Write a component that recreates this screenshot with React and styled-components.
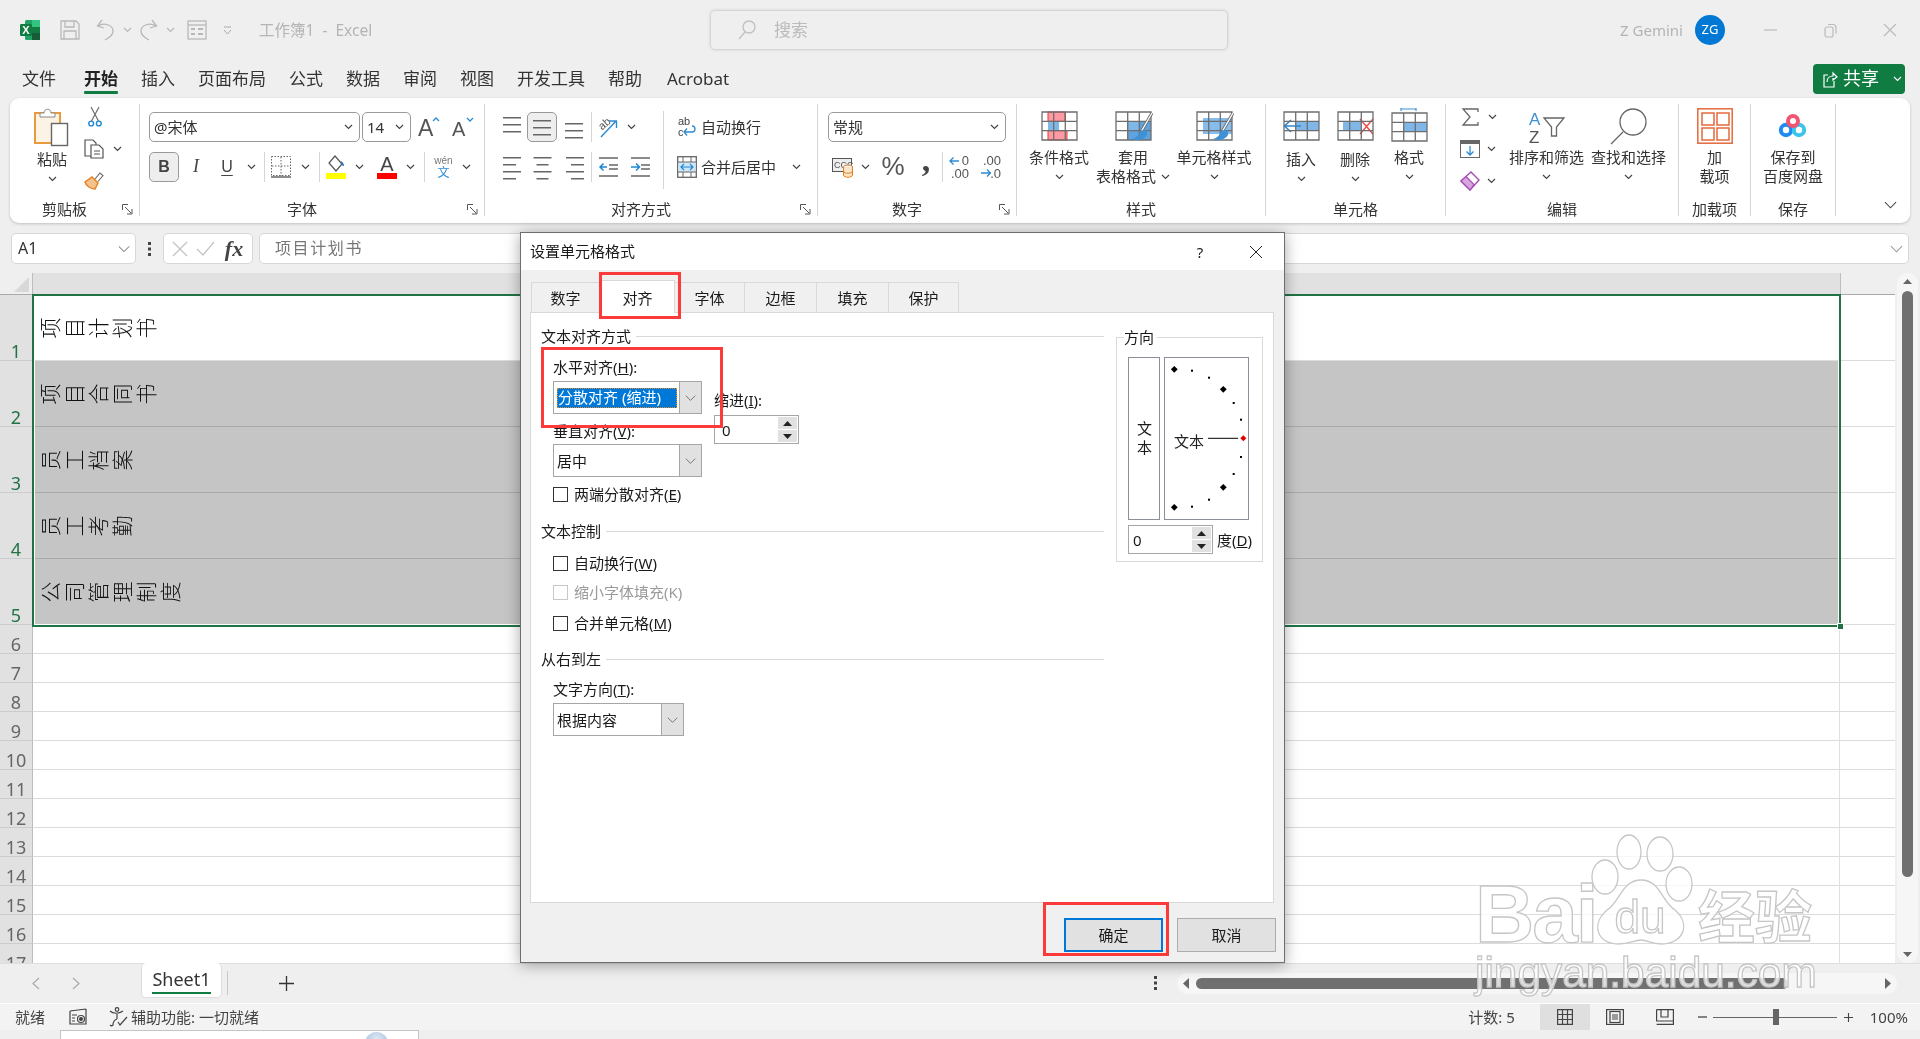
import React from 'react';
import styled, { createGlobalStyle } from 'styled-components';

const Global = createGlobalStyle`
  html, body { margin: 0; padding: 0; width: 1920px; height: 1039px; overflow: hidden; background: #efefef; }
  body { font-family: "Noto Sans", "Noto Sans CJK SC", sans-serif; font-size: 15px; line-height: 1.2; color: #333; }
  svg { display: block; flex: none; overflow: visible; }
`;

const Page = styled.div`position: relative; width: 1920px; height: 1039px; display: flex; flex-direction: column; overflow: hidden; background: #efefef; filter: blur(.25px);`;

/* ---------- title bar ---------- */
const TitleBar = styled.header`height: 60px; flex: none; display: flex; align-items: center;`;
const QuickAccess = styled.div`width: 710px; flex: none; padding-left: 20px; box-sizing: border-box; display: flex; align-items: center;`;
const QuickCell = styled.div`width: ${p => p.$w}px; flex: none; display: flex; justify-content: center; align-items: center;`;
const DocTitle = styled.div`margin-left: 12px; color: #b4b4b4; font-size: 15.5px; white-space: pre;`;
const SearchBox = styled.div`width: 518px; height: 40px; box-sizing: border-box; flex: none; display: flex; align-items: center; gap: 18px; padding-left: 27px; border: 1px solid #d6d6d6; border-radius: 5px; box-shadow: 0 0 3px rgba(0,0,0,.12); color: #bbb; font-size: 17px;`;
const TitleRight = styled.div`flex: 1; display: flex; justify-content: flex-end; align-items: center;`;
const UserName = styled.div`color: #b4b4b4; font-size: 15px;`;
const Avatar = styled.div`width: 30px; height: 30px; border-radius: 50%; background: #0078d4; color: #fff; font-size: 13px; display: flex; align-items: center; justify-content: center; margin: 0 15px 0 12px;`;
const WinBtn = styled.div`width: 60px; display: flex; justify-content: center;`;

/* ---------- tabs ---------- */
const TabRow = styled.nav`height: 38px; flex: none; display: flex; align-items: center; gap: 23px; padding-left: 22px; font-size: 17px; color: #333;`;
const RibbonTab = styled.div`position: relative; font-weight: ${p => p.$active ? 700 : 400}; margin-left: ${p => p.$shift || 0}px; color: ${p => p.$active ? '#222' : '#333'};
  &::after { content: ''; display: ${p => p.$active ? 'block' : 'none'}; position: absolute; left: 0; right: 0; bottom: -5px; height: 3px; background: #107c41; border-radius: 1px; }`;
const ShareBtn = styled.div`margin-left: auto; margin-right: 15px; width: 92px; height: 30px; background: #107c41; color: #fff; border-radius: 4px; font-size: 18px; display: flex; align-items: center; padding-left: 10px; gap: 6px; box-sizing: border-box;`;

/* ---------- ribbon ---------- */
const Ribbon = styled.div`width: 1900px; height: 125px; margin-left: 10px; flex: none; box-sizing: border-box; padding-top: 6px; background: #fff; border-radius: 9px; box-shadow: 0 1px 3px rgba(0,0,0,.2); display: flex; font-size: 15px; color: #333;`;
const Group = styled.section`width: ${p => p.$w}px; flex: none; height: 112px; box-sizing: border-box; border-right: 1px solid #d6d6d6; display: flex; flex-direction: column;`;
const GroupBody = styled.div`height: 98px; flex: none; box-sizing: border-box; padding: 4px 0 0 ${p => p.$pl || 0}px; display: flex; justify-content: ${p => p.$center ? 'center' : 'flex-start'};`;
const GroupFoot = styled.div`display: flex; height: 15px; line-height: 15px;`;
const GroupName = styled.div`flex: 1; text-align: center; white-space: nowrap;`;
const Launcher = styled.div`width: 20px; flex: none; display: flex; align-items: center; justify-content: flex-start; padding-left: 3px; box-sizing: border-box;`;
const RibbonEnd = styled.div`flex: 1; display: flex; align-items: flex-end; justify-content: flex-end; padding: 0 13px 14px 0;`;

const LargeTool = styled.div`width: ${p => p.$w}px; flex: none; display: flex; flex-direction: column; align-items: center; margin-left: ${p => p.$ml || 0}px;`;
const IconSlot = styled.div`height: ${p => p.$h || 40}px; display: flex; justify-content: center; align-items: flex-start;`;
const ToolLine = styled.div`height: 19px; line-height: 19px; white-space: nowrap; display: flex; align-items: center; justify-content: center; gap: 5px;`;

const SmallStack = styled.div`display: flex; flex-direction: column; margin-top: -7px; margin-left: ${p => p.$ml || 0}px; width: ${p => p.$w}px; flex: none;`;
const StackRow = styled.div`height: 32px; display: flex; align-items: center;`;
const Chevron = styled.div`margin-left: ${p => p.$ml || 0}px; display: flex;`;

const ToolColumn = styled.div`display: flex; flex-direction: column; gap: 10px; margin-top: 4px; width: ${p => p.$w ? p.$w + 'px' : 'auto'}; flex: none;`;
const ToolRow = styled.div`display: flex; height: 30px; align-items: center;`;
const Cell = styled.div`width: ${p => p.$w}px; height: 30px; flex: none; box-sizing: border-box; display: flex; align-items: center; justify-content: center; color: #444;
  ${p => p.$on ? 'background:#eee;border:1px solid #999;border-radius:5px;' : ''}`;
const Sep = styled.div`width: 1px; height: 30px; flex: none; background: #d6d6d6;`;
const TallSep = styled.div`width: 1px; height: 78px; flex: none; background: #d6d6d6; margin-top: 3px;`;
const Combo = styled.div`width: ${p => p.$w}px; height: 30px; box-sizing: border-box; flex: none; border: 1px solid #9a9a9a; border-radius: 5px; display: flex; align-items: center; justify-content: space-between; padding: 0 6px 0 4px; font-size: 15px; color: #333; margin-right: ${p => p.$mr || 0}px;`;
const GlyphBold = styled.span`font-family: "Liberation Sans", sans-serif; font-weight: 700; font-size: 16px;`;
const GlyphItalic = styled.span`font-family: "Liberation Serif", serif; font-style: italic; font-size: 18px;`;
const GlyphUnder = styled.span`font-family: "Liberation Sans", sans-serif; font-size: 16px; text-decoration: underline; text-underline-offset: 3px;`;
const GlyphPercent = styled.span`font-family: "Liberation Sans", sans-serif; font-size: 26px; color: #555;`;
const GlyphComma = styled.span`font-family: "Liberation Serif", serif; font-weight: 700; font-size: 34px; line-height: 20px; margin-top: -14px; color: #444;`;
const TextColumn = styled.div`display: flex; flex-direction: column; gap: 10px; margin: 4px 0 0 12px; flex: none;`;
const TextTool = styled.div`height: 30px; box-sizing: border-box; padding-bottom: 1px; display: flex; align-items: center; white-space: nowrap;`;
const TextToolIcon = styled.div`width: 21px; margin-right: 4px; flex: none; display: flex; justify-content: center;`;

/* ---------- formula bar ---------- */
const FormulaBar = styled.div`height: 31px; margin: 10px 0 9px 11px; flex: none; display: flex; align-items: center;`;
const fieldBox = `height: 31px; box-sizing: border-box; border: 1px solid #d8d8d8; border-radius: 5px; background: #fff; display: flex; align-items: center;`;
const NameBox = styled.div`${fieldBox} width: 125px; padding: 0 5px 0 6px; justify-content: space-between; font-size: 16px; color: #333;`;
const Dots = styled.div`width: 27px; flex: none; display: flex; justify-content: center;`;
const FxBox = styled.div`${fieldBox} width: 90px; justify-content: space-around; padding: 0 4px;`;
const FxGlyph = styled.span`font-family: "Liberation Serif", serif; font-style: italic; font-weight: 700; font-size: 22px; line-height: 24px; color: #444;`;
const FormulaInput = styled.div`${fieldBox} width: 1650px; margin-left: 6px; padding: 0 5px 0 15px; justify-content: space-between; color: #777; font-size: 16px; letter-spacing: 1.6px;`;

/* ---------- sheet ---------- */
const SheetArea = styled.div`height: 690px; flex: none; display: flex;`;
const Grid = styled.div`width: 1895px; flex: none; overflow: hidden; position: relative;`;
const HeadRow = styled.div`height: 22px; display: flex; box-sizing: border-box;`;
const Corner = styled.div`width: 33px; flex: none; box-sizing: border-box; border-right: 1px solid #bdbdbd; border-bottom: 1px solid #aaa; display: flex; justify-content: flex-end; align-items: flex-end; padding: 0 3px 2px 0;`;
const ColHead = styled.div`width: 1808px; flex: none; background: #e1e1e1; border-bottom: 1px solid #aaa; border-right: 1px solid #bdbdbd; box-sizing: border-box;`;
const ColRest = styled.div`flex: 1; border-bottom: 1px solid #aaa;`;
const SheetRow = styled.div`height: ${p => p.$h}px; display: flex;`;
const RowHead = styled.div`width: 33px; flex: none; box-sizing: border-box; background: #e1e1e1; border-right: 1px solid #bdbdbd; border-bottom: 1px solid #ccc; color: ${p => p.$sel ? '#217346' : '#666'}; font-size: 18px; line-height: 20px; text-align: center; display: flex; align-items: flex-end; justify-content: center;`;
const RowNumber = styled.span`margin-bottom: -1px;`;
const MainCell = styled.div`width: 1807px; flex: none; box-sizing: border-box; border-right: 1px solid #e0e0e0; border-bottom: 1px solid ${p => p.$shade ? '#a9a9a9' : '#dcdcdc'}; background: ${p => p.$shade ? '#c5c5c5' : '#fff'}; padding: 24px 0 0 7px;`;
const RestCell = styled.div`flex: 1; background: #fff; border-bottom: 1px solid #dcdcdc;`;
const RotatedText = styled.div`writing-mode: vertical-lr; text-orientation: upright; width: 21px; line-height: 21px; font-size: 21px; letter-spacing: 3px; font-weight: 300; color: #111; white-space: nowrap; transform-origin: 10.5px 10.5px; transform: rotate(-90deg);`;
const Selection = styled.div`position: absolute; left: 32px; top: 21px; width: 1809px; height: 333px; box-sizing: border-box; border: 2px solid #217346; box-shadow: inset 0 0 0 1px #fff;`;
const SelHandle = styled.div`position: absolute; right: -5px; bottom: -5px; width: 5px; height: 5px; background: #217346; border: 1px solid #fff;`;

const VScroll = styled.div`flex: 1; padding: 0 2px;`;
const VTrack = styled.div`height: 100%; box-sizing: border-box; background: #f6f6f6; border-radius: 10px; padding: 6px 0; display: flex; flex-direction: column; align-items: center;`;
const VThumb = styled.div`width: 11px; height: 586px; background: #707070; border-radius: 6px; margin-top: 7px;`;
const VDown = styled.div`margin-top: auto;`;

/* ---------- sheet tabs ---------- */
const SheetBar = styled.div`height: 40px; flex: none; display: flex; align-items: center; padding: 0 0 1px 16px; box-sizing: border-box; border-top: 1px solid #dedede; position: relative;`;
const NavArrow = styled.div`width: 40px; flex: none; display: flex; justify-content: center;`;
const SheetTab = styled.div`position: relative; align-self: flex-start; margin: -1px 0 0 45px; width: 81px; height: 35px; box-sizing: border-box; background: #fff; border: 1px solid #ddd; border-top: 0; border-radius: 5px; font-size: 18px; color: #333; text-align: center; line-height: 32px;
  &::after { content: ''; position: absolute; left: 10px; right: 10px; bottom: 3px; height: 2px; background: #107c41; }`;
const TabSep = styled.div`width: 1px; height: 24px; background: #c8c8c8; margin-left: 5px; flex: none;`;
const AddSheet = styled.div`width: 40px; margin-left: 38px; display: flex; justify-content: center; flex: none;`;
const HDots = styled.div`margin-left: auto; margin-right: 19px;`;
const HTrack = styled.div`width: 720px; height: 21px; margin-right: 23px; flex: none; box-sizing: border-box; background: #f6f6f6; border-radius: 10px; display: flex; align-items: center; padding: 0 6px;`;
const HThumb = styled.div`width: 592px; height: 11px; margin-left: 7px; background: #707070; border-radius: 6px;`;
const HRight = styled.div`margin-left: auto;`;

/* ---------- status bar ---------- */
const StatusBar = styled.footer`height: 27px; flex: none; background: #f3f3f3; border-top: 1px solid #fff; box-sizing: border-box; display: flex; align-items: center; font-size: 15px; color: #444; padding-right: 12px;`;
const StatusItem = styled.div`margin-left: ${p => p.$ml === 'auto' ? 'auto' : p.$ml + 'px'}; flex: none; display: flex; align-items: center;`;
const ViewBtn = styled.div`width: 50px; height: 26px; flex: none; display: flex; align-items: center; justify-content: center; background: ${p => p.$on ? '#dfdfdf' : 'transparent'};`;
const ZoomTrack = styled.div`width: 124px; height: 1px; background: #666; margin-left: 6px; position: relative; flex: none;`;
const ZoomThumb = styled.div`position: absolute; left: 60px; top: -8px; width: 6px; height: 16px; background: #666;`;
const BottomStrip = styled.div`height: 9px; flex: none; padding-left: 60px; background: #efefef;`;
const StripWindow = styled.div`width: 359px; height: 9px; box-sizing: border-box; background: #fff; border: 1px solid #c5c5c5; border-bottom: 0; overflow: hidden; display: flex; justify-content: flex-end; padding-right: 30px;`;
const StripOrb = styled.div`width: 23px; height: 23px; margin-top: 1px; border-radius: 50%; background: radial-gradient(circle at 50% 30%, #dfe9f5, #8fb0d4);`;

/* ---------- dialog ---------- */
const Dialog = styled.div`position: absolute; left: 520px; top: 232px; width: 765px; height: 731px; box-sizing: border-box; background: #f0f0f0; border: 1px solid #6e6e6e; box-shadow: 0 2px 14px rgba(0,0,0,.35); display: flex; flex-direction: column; font-size: 15px; color: #1a1a1a; z-index: 5;`;
const DialogHead = styled.div`height: 37px; flex: none; background: #fff; display: flex; align-items: center; padding-left: 9px;`;
const DialogTitle = styled.div`flex: 1; margin-top: -2px;`;
const HeadBtn = styled.div`width: 56px; flex: none; display: flex; justify-content: center; font-size: 15px;`;
const DialogTabs = styled.div`height: 33px; flex: none; margin-top: 10px; padding-left: 10px; display: flex; align-items: flex-start; position: relative; z-index: 1;`;
const DlgTab = styled.div`width: ${p => p.$w}px; margin-top: ${p => p.$on ? 0 : 2}px; height: ${p => p.$on ? 33 : 31}px; box-sizing: border-box; background: ${p => p.$on ? '#fff' : '#f0f0f0'}; border: 1px solid #d9d9d9; border-left-width: ${p => p.$on || p.$first ? 1 : 0}px; border-bottom-width: ${p => p.$on ? 0 : 1}px; text-align: center; line-height: ${p => p.$on ? 34 : 31}px;`;
const Panel = styled.div`height: 591px; flex: none; margin: -1px 10px 0 9px; box-sizing: border-box; background: #fff; border: 1px solid #d9d9d9; padding: 14px 10px 0 10px; display: flex;`;
const LeftCol = styled.div`width: 563px; flex: none; margin-top: -1px;`;
const SectionHead = styled.div`height: 20px; line-height: 20px; margin-top: ${p => p.$mt || 0}px; display: flex; align-items: center; gap: 5px; white-space: nowrap;
  &::after { content: ''; flex: 1; height: 1px; background: #d9d9d9; }`;
const Indented = styled.div`padding-left: 12px;`;
const AlignGrid = styled.div`display: flex; gap: 12px;`;
const FieldCol = styled.div`width: ${p => p.$w}px; flex: none; display: flex; flex-direction: column; padding-top: ${p => p.$pt || 0}px;`;
const FieldLabel = styled.div`height: 20px; line-height: 20px; margin-top: ${p => p.$mt || 0}px; white-space: nowrap;`;
const Select = styled.div`width: ${p => p.$w}px; height: 33px; margin-top: ${p => p.$mt || 0}px; box-sizing: border-box; flex: none; border: 1px solid #a6a6a6; background: #fff; display: flex; padding: 0;`;
const SelectValue = styled.div`flex: 1; display: flex; align-items: center; padding: 0 1px 0 3px; overflow: hidden; white-space: nowrap;`;
const Highlight = styled.div`flex: 1; height: 20px; line-height: 19px; padding-left: 1px; background: #0078d7; color: #fff; outline: 1px dotted #e28b2c; outline-offset: -1px; margin-right: 1px;`;
const SelectBtn = styled.div`width: 21px; flex: none; background: #e1e1e1; border-left: 1px solid #a6a6a6; display: flex; align-items: center; justify-content: center;`;
const SpinBox = styled.div`width: ${p => p.$w}px; height: 29px; margin-top: ${p => p.$mt || 0}px; box-sizing: border-box; flex: none; border: 1px solid #a6a6a6; background: #fff; display: flex; align-items: center; justify-content: space-between; padding: 0 1px 0 ${p => p.$pl || 7}px;`;
const SpinBtns = styled.div`width: 19px; display: flex; flex-direction: column; gap: 1px;`;
const SpinBtn = styled.div`height: 12px; background: #e1e1e1; display: flex; align-items: center; justify-content: center;`;
const CheckRow = styled.label`height: 20px; margin-top: ${p => p.$mt || 0}px; display: flex; align-items: center; gap: 6px; white-space: nowrap; color: ${p => p.$off ? '#9a9a9a' : '#1a1a1a'};`;
const CheckBox = styled.span`width: 15px; height: 15px; box-sizing: border-box; flex: none; border: 1px solid ${p => p.$off ? '#c8c8c8' : '#333'}; background: #fff;`;
const DirField = styled.fieldset`width: 147px; height: 235px; margin: 0 0 0 12px; padding: 10px 0 0 11px; box-sizing: border-box; border: 1px solid #d9d9d9; flex: none; min-inline-size: 0;`;
const DirLegend = styled.legend`padding: 0 3px 0 0; margin-left: -4px; line-height: 20px;`;
const DirBoxes = styled.div`display: flex; gap: 4px;`;
const VerticalBox = styled.div`width: 32px; height: 163px; box-sizing: border-box; border: 1px solid #8a8f99; display: flex; align-items: center; justify-content: center; writing-mode: vertical-rl; text-orientation: upright; letter-spacing: 4px; padding-top: 2px;`;
const ArcBox = styled.div`width: 85px; height: 163px; box-sizing: border-box; border: 1px solid #8a8f99;`;
const DegreeRow = styled.div`display: flex; align-items: center; margin-top: 5px; gap: 4px; white-space: nowrap;`;
const DialogFoot = styled.div`flex: 1; display: flex; justify-content: flex-end; gap: 14px; padding: 15px 8px 0 0;`;
const DlgButton = styled.div`width: 99px; height: 34px; box-sizing: border-box; background: #e1e1e1; border: ${p => p.$primary ? '2px solid #0078d7' : '1px solid #adadad'}; display: flex; align-items: center; justify-content: center;`;
const RedBox = styled.div`position: absolute; left: ${p => p.$x - 521}px; top: ${p => p.$y - 233}px; width: ${p => p.$w}px; height: ${p => p.$h}px; box-sizing: border-box; border: 3px solid #fb3b3b; z-index: 3; pointer-events: none;`;

const WatermarkLayer = styled.div`position: absolute; left: 1470px; top: 830px; z-index: 6; filter: blur(.3px);`;

/* ---------- small icons ---------- */
const Chev = ({ c = '#444' }) => (
  <svg width="9" height="6" viewBox="0 0 9 6"><path d="M1 1l3.5 3.5L8 1" fill="none" stroke={c} strokeWidth="1.2" /></svg>
);
const WideChev = ({ c = '#555', w = 14 }) => (
  <svg width={w} height="8" viewBox="0 0 14 8"><path d="M1 1l6 6 6-6" fill="none" stroke={c} strokeWidth="1.1" /></svg>
);
const Tri = ({ down, c = '#222' }) => (
  <svg width="9" height="5" viewBox="0 0 9 5"><path d={down ? 'M0 0h9L4.5 5z' : 'M4.5 0L9 5H0z'} fill={c} /></svg>
);

const ExcelLogo = () => (
  <svg width="20" height="20" viewBox="0 0 20 20">
    <rect x="5" y="0" width="15" height="20" rx="1.5" fill="#21a366" />
    <rect x="12" y="0" width="8" height="7" fill="#33c481" />
    <rect x="12" y="13" width="8" height="7" fill="#185c37" />
    <rect x="12" y="7" width="8" height="6" fill="#107c41" />
    <rect x="0" y="4" width="12" height="12" rx="1.2" fill="#107c41" />
    <text x="6" y="14" textAnchor="middle" fontSize="11" fontWeight="700" fontFamily="Liberation Sans" fill="#fff">X</text>
  </svg>
);
const SaveIcon = () => (
  <svg width="20" height="20" viewBox="0 0 20 20" fill="none" stroke="#b8b8b8" strokeWidth="1.3">
    <path d="M1 1h15l3 3v15H1z" /><path d="M5 1v6h9V1M4 19v-8h12v8" />
  </svg>
);
const UndoIcon = ({ flip }) => (
  <svg width="19" height="22" viewBox="0 0 19 22" fill="none" stroke="#b8b8b8" strokeWidth="1.3" transform={flip ? 'scale(-1,1)' : undefined}>
    <path d="M6 1L1.5 7 8 9" /><path d="M2 7c6-4 15-1 15 5 0 4-4 7-8 9" />
  </svg>
);
const FormIcon = () => (
  <svg width="20" height="20" viewBox="0 0 20 20" fill="none" stroke="#b8b8b8" strokeWidth="1.3">
    <rect x="1" y="1" width="18" height="18" /><path d="M1 5h18" /><path d="M4 9h4M11 9h5M4 14h4M11 14h5" strokeWidth="2" />
  </svg>
);
const QatMore = () => (
  <svg width="9" height="9" viewBox="0 0 9 9" fill="none" stroke="#aaa" strokeWidth="1"><path d="M1 1h7M1 4l3.5 4L8 4" /></svg>
);
const SearchIcon = () => (
  <svg width="18" height="20" viewBox="0 0 18 20" fill="none" stroke="#c0c0c0" strokeWidth="1.3"><circle cx="11" cy="7" r="6" /><path d="M7 12L1 19" /></svg>
);
const ShareIcon = () => (
  <svg width="14" height="17" viewBox="0 0 14 17" fill="none" stroke="#fff" strokeWidth="1.2"><path d="M5 4H1v12h10v-6" /><path d="M4 11c0-4 3-6 6-6V2l4 4-4 3V7" /></svg>
);
const MinIcon = () => <svg width="13" height="2" viewBox="0 0 13 2"><path d="M0 1h13" stroke="#bbb" strokeWidth="1.2" /></svg>;
const RestoreIcon = () => (
  <svg width="13" height="15" viewBox="0 0 13 15" fill="none" stroke="#bbb" strokeWidth="1.2"><rect x="1" y="4" width="8" height="10" rx="2" /><path d="M4 1.5h5a3 3 0 013 3v6" /></svg>
);
const CloseIcon = ({ s = 12, c = '#bbb', sw = 1.2 }) => (
  <svg width={s} height={s} viewBox="0 0 12 12"><path d="M0 0l12 12M12 0L0 12" stroke={c} strokeWidth={sw} fill="none" /></svg>
);
const LaunchIcon = () => (
  <svg width="11" height="11" viewBox="0 0 11 11" fill="none" stroke="#555" strokeWidth="1"><path d="M.5 6V.5H6M3 3l6 6M5 10h5V5" /></svg>
);

const PasteIcon = () => (
  <svg width="36" height="40" viewBox="0 0 36 40">
    <rect x="1" y="5" width="25" height="30" fill="#fdf3e4" stroke="#e99a3c" strokeWidth="2" />
    <path d="M6 9V5h4c0-5 7-5 7 0h4v4z" fill="#fff" stroke="#888" strokeWidth="1" />
    <rect x="17.5" y="15.5" width="16" height="22" fill="#fff" stroke="#666" strokeWidth="1.4" />
  </svg>
);
const CutIcon = () => (
  <svg width="14" height="20" viewBox="0 0 14 20" fill="none">
    <path d="M3.5 14L11 0M10.5 14L3 0" stroke="#666" strokeWidth="1.1" />
    <circle cx="3.2" cy="16.5" r="2.4" stroke="#1e88d2" strokeWidth="1.4" /><circle cx="10.8" cy="16.5" r="2.4" stroke="#1e88d2" strokeWidth="1.4" />
  </svg>
);
const CopyIcon = () => (
  <svg width="20" height="20" viewBox="0 0 20 20" fill="#fff" stroke="#555" strokeWidth="1.2">
    <path d="M1 1h8l3 3v13H1z" /><path d="M7 6h8l4 4v9H7z" /><path d="M10 12h6M10 15h6" />
  </svg>
);
const BrushIcon = () => (
  <svg width="20" height="18" viewBox="0 0 20 18" fill="none">
    <path d="M11 7l5-6 3 2.5-5 6" fill="#fff" stroke="#666" strokeWidth="1.1" />
    <path d="M8 5l6 6-3 6c-4 0-9-3-10-7z" fill="#f5c28a" stroke="#e3811f" strokeWidth="1.4" />
  </svg>
);
const FontGrow = ({ small }) => (
  <svg width="22" height="24" viewBox="0 0 22 24">
    <text x="0" y="21" fontSize={small ? 20 : 23} fontFamily="Liberation Sans" fill="#555">A</text>
    <path d={small ? 'M15 3l3 3 3-3' : 'M15 6l3-3 3 3'} fill="none" stroke="#2b8ad3" strokeWidth="1.3" />
  </svg>
);
const BorderIcon = () => (
  <svg width="20" height="22" viewBox="0 0 20 22" fill="none" stroke="#666" strokeWidth="1" strokeDasharray="1.5 1.5">
    <rect x=".5" y=".5" width="19" height="19" /><path d="M10 1v19M1 10h18" /><path d="M0 21h20" strokeDasharray="none" strokeWidth="1.5" />
  </svg>
);
const FillIcon = () => (
  <svg width="20" height="24" viewBox="0 0 20 24">
    <path d="M9 1l7 8-6 7-7-8z" fill="#fff" stroke="#555" strokeWidth="1.2" />
    <path d="M15 6c2 1 3 3 3 5-2 0-3-2-3-5z" fill="#1b76c4" />
    <rect y="18" width="20" height="6" fill="#ffff00" />
  </svg>
);
const ColorA = () => (
  <svg width="20" height="24" viewBox="0 0 20 24">
    <text x="10" y="16" textAnchor="middle" fontSize="20" fontFamily="Liberation Sans" fill="#444">A</text>
    <rect y="18" width="20" height="6" fill="#ff0000" />
  </svg>
);
const WenIcon = () => (
  <svg width="19" height="24" viewBox="0 0 19 24">
    <text x="9.5" y="9" textAnchor="middle" fontSize="10" fontFamily="Liberation Sans" fill="#777">wén</text>
    <text x="9.5" y="22" textAnchor="middle" fontSize="12" fontFamily="Noto Sans CJK SC" fill="#2b8ad3">文</text>
  </svg>
);
const Lines = ({ w = [18, 18, 18], pos = 0, anchor = 'left', h = 20 }) => (
  <svg width="19" height={h} viewBox={`0 0 19 ${h}`} stroke="#666" strokeWidth="1.5">
    {w.map((l, i) => {
      const x = anchor === 'center' ? (19 - l) / 2 : anchor === 'right' ? 19 - l : 0;
      return <path key={i} d={`M${x} ${pos + i * 7 + .75}h${l}`} />;
    })}
  </svg>
);
const OrientIcon = () => (
  <svg width="21" height="21" viewBox="0 0 21 21" fill="none">
    <text x="1" y="11" fontSize="11" fontFamily="Liberation Sans" fill="#555" transform="rotate(-40 6 8)">ab</text>
    <path d="M3 20L18 4M11 4h7.5v7" stroke="#2b8ad3" strokeWidth="1.4" />
  </svg>
);
const IndentIcon = ({ right }) => (
  <svg width="19" height="20" viewBox="0 0 19 20" stroke="#666" strokeWidth="1.5" fill="none">
    <path d="M0 1h19M10 8h9M10 12h9M0 19h19" />
    <path d={right ? 'M0 10h8M5 6.5L8.5 10 5 13.5' : 'M8 10H1M4.5 6.5L1 10l3.5 3.5'} stroke="#1e88d2" />
  </svg>
);
const WrapIcon = () => (
  <svg width="18" height="22" viewBox="0 0 18 22">
    <text x="0" y="9" fontSize="11" fontFamily="Liberation Sans" fill="#444">ab</text>
    <text x="0" y="20" fontSize="11" fontFamily="Liberation Sans" fill="#444">c</text>
    <path d="M6 16h8c4 0 4-6 0-6M9 12.5L6 16l3 3.5" fill="none" stroke="#2b8ad3" strokeWidth="1.3" />
  </svg>
);
const MergeIcon = () => (
  <svg width="20" height="22" viewBox="0 0 20 22" fill="none">
    <rect x=".7" y=".7" width="18.6" height="20.6" stroke="#666" strokeWidth="1.3" />
    <rect x="1.5" y="6" width="17" height="10" fill="#cfe6f7" />
    <path d="M1 6h18M1 16h18M6 .7V6M14 .7V6M6 16v5M14 16v5" stroke="#666" />
    <path d="M4 11h12M7 8l-3 3 3 3M13 8l3 3-3 3" stroke="#1e88d2" strokeWidth="1.2" />
  </svg>
);
const AccountIcon = () => (
  <svg width="21" height="22" viewBox="0 0 21 22" fill="none">
    <rect x=".5" y="2.5" width="19" height="13" fill="#eee" stroke="#555" />
    <text x="2" y="12" fontSize="9" fontFamily="Liberation Sans" fill="#555">CCC</text>
    <ellipse cx="16" cy="11" rx="4.5" ry="2" fill="#fff" stroke="#e3811f" />
    <path d="M11.5 11v8c0 3 9 3 9 0v-8M11.5 15c0 3 9 3 9 0" fill="#fce4c7" stroke="#e3811f" />
  </svg>
);
const DecIcon = ({ more }) => (
  <svg width="20" height="24" viewBox="0 0 20 24">
    <text x="20" y="10" textAnchor="end" fontSize="13" fontFamily="Liberation Sans" fill="#555">{more ? '.00' : '0'}</text>
    <text x="20" y="23" textAnchor="end" fontSize="13" fontFamily="Liberation Sans" fill="#555">{more ? '.0' : '.00'}</text>
    <path d={more ? 'M0 18h9M6 14.5l3.5 3.5L6 21.5' : 'M10 6H1M4.5 2.5L1 6l3.5 3.5'} fill="none" stroke="#2b8ad3" strokeWidth="1.3" />
  </svg>
);

const SheetGrid = ({ children, top = 4 }) => (
  <svg width="38" height="40" viewBox="0 0 38 40" fill="none">
    <g transform={`translate(2 ${top})`}>
      <rect width="35" height="28" fill="#fff" />
      {children}
      <path d="M0 0h35v28H0zM11.7 0v28M23.3 0v28M0 9.3h35M0 18.7h35" stroke="#6e6e6e" strokeWidth="1.3" />
    </g>
  </svg>
);
const BrushHead = () => (
  <>
    <path d="M36 1L25 20" stroke="#666" strokeWidth="3" />
    <path d="M36 1L25 20" stroke="#fff" strokeWidth="1.4" />
    <path d="M24 19c3-2 6-1 7 1s-1 7-8 8c-3 0-6 0-7-1 4-1 7-4 8-8z" fill="#3f91d4" />
  </>
);
const Cond = () => (
  <SheetGrid>
    <rect x="6" y="0" width="17" height="9.3" fill="#ff9aa2" stroke="#e53b3b" />
    <rect x="6" y="9.3" width="11" height="9.3" fill="#7fb7e8" />
    <rect x="6" y="18.7" width="19" height="9.3" fill="#ff9aa2" stroke="#e53b3b" />
  </SheetGrid>
);
const WithBrush = ({ children }) => (
  <svg width="38" height="40" viewBox="0 0 38 40" fill="none">
    <g transform="translate(2 4)">
      <rect width="35" height="28" fill="#fff" />
      {children}
      <path d="M0 0h35v28H0zM11.7 0v28M23.3 0v28M0 9.3h35M0 18.7h35" stroke="#6e6e6e" strokeWidth="1.3" />
      <BrushHead />
    </g>
  </svg>
);
const TableStyle = () => (
  <WithBrush><rect x="11.7" y="9.3" width="23.3" height="18.7" fill="#5fa3de" /><rect x="11.7" y="9.3" width="11.6" height="9.4" fill="#7fb7e8" /></WithBrush>
);
const CellStyle = () => (
  <WithBrush><rect x="6" y="6" width="29" height="16" fill="#86bdec" /></WithBrush>
);
const InsertIcon = () => (
  <SheetGrid>
    <rect x="12" y="9.3" width="23" height="9.4" fill="#7fb7e8" />
    <path d="M0 14h17M7 8l-6.5 6L7 20" stroke="#2f86cf" strokeWidth="1.6" />
  </SheetGrid>
);
const DeleteIcon = () => (
  <SheetGrid>
    <rect x="5" y="9.3" width="18" height="9.4" fill="#7fb7e8" />
    <path d="M22 7l13 15M35 7L22 22" stroke="#f04747" strokeWidth="1.4" />
  </SheetGrid>
);
const FormatIcon = () => (
  <svg width="38" height="40" viewBox="0 0 38 40" fill="none">
    <path d="M11 1h15M11 0v3M26 0v3" stroke="#3f91d4" strokeWidth="1.2" />
    <g transform="translate(2 5)">
      <rect x="11.7" y="9.3" width="23.3" height="9.4" fill="#7fb7e8" />
      <path d="M0 0h35v28H0zM11.7 0v28M23.3 0v28M0 9.3h35M0 18.7h35" stroke="#6e6e6e" strokeWidth="1.3" />
    </g>
  </svg>
);
const SigmaIcon = () => (
  <svg width="17" height="18" viewBox="0 0 17 18" fill="none"><path d="M16 4V1H1l7 8-7 8h15v-3" stroke="#666" strokeWidth="1.3" /></svg>
);
const DownFill = () => (
  <svg width="20" height="18" viewBox="0 0 20 18" fill="none">
    <rect x=".5" y=".5" width="19" height="17" stroke="#666" /><rect x="1" y="1" width="18" height="3" fill="#666" />
    <path d="M10 6v9M6.5 11.5L10 15l3.5-3.5" stroke="#2b8ad3" strokeWidth="1.3" />
  </svg>
);
const EraserIcon = () => (
  <svg width="20" height="20" viewBox="0 0 20 20" fill="none">
    <path d="M11 1l8 8-9 10-9-9z" fill="#fff" stroke="#a64ab5" strokeWidth="1.4" />
    <path d="M6 5.5l8 8L10 19l-9-9z" fill="#d7a6df" stroke="#a64ab5" strokeWidth="1.2" />
  </svg>
);
const SortIcon = () => (
  <svg width="38" height="40" viewBox="0 0 38 40" fill="none">
    <text x="1" y="17" fontSize="17" fontFamily="Liberation Sans" fill="#3f91d4">A</text>
    <text x="1" y="35" fontSize="17" fontFamily="Liberation Sans" fill="#555">Z</text>
    <path d="M16 10h20l-7.5 9v9h-5v-9z" stroke="#666" strokeWidth="1.3" />
  </svg>
);
const FindIcon = () => (
  <svg width="38" height="40" viewBox="0 0 38 40" fill="none" stroke="#666" strokeWidth="1.3"><circle cx="23" cy="14" r="13" /><path d="M13 24L1 36" /></svg>
);
const AddinIcon = () => (
  <svg width="36" height="36" viewBox="0 0 36 36" fill="none" stroke="#e36a3c" strokeWidth="1.5">
    <rect x=".8" y=".8" width="34.4" height="34.4" /><rect x="5" y="5" width="12" height="12" /><rect x="20" y="5" width="12" height="12" /><rect x="5" y="20" width="12" height="12" /><rect x="20" y="20" width="12" height="12" />
  </svg>
);
const BaiduDisk = () => (
  <svg width="28" height="40" viewBox="0 0 28 40" fill="none">
    <g transform="translate(0 6)" strokeWidth="4">
      <circle cx="7" cy="16" r="5.2" stroke="#1f8bf0" />
      <circle cx="20" cy="16" r="5.2" stroke="#3cc5ec" />
      <circle cx="14" cy="7" r="5" stroke="#f0566f" />
    </g>
  </svg>
);
const MoreDots = () => (
  <svg width="4" height="14" viewBox="0 0 4 14" fill="#444"><rect y="0" width="3" height="3" /><rect y="5.5" width="3" height="3" /><rect y="11" width="3" height="3" /></svg>
);
const CheckMark = () => (
  <svg width="19" height="15" viewBox="0 0 19 15"><path d="M1 8l6 6L18 1" fill="none" stroke="#c4c4c4" strokeWidth="1.2" /></svg>
);
const CornerTri = () => <svg width="15" height="15" viewBox="0 0 15 15"><path d="M15 0v15H0z" fill="#d8d8d8" /></svg>;
const NavIcon = ({ right }) => (
  <svg width="8" height="13" viewBox="0 0 8 13"><path d={right ? 'M1 1l6 5.5L1 12' : 'M7 1L1 6.5 7 12'} fill="none" stroke="#aaa" strokeWidth="1.2" /></svg>
);
const PlusIcon = () => <svg width="15" height="15" viewBox="0 0 15 15"><path d="M7.5 0v15M0 7.5h15" stroke="#333" strokeWidth="1.3" /></svg>;
const Side = ({ right }) => (
  <svg width="6" height="11" viewBox="0 0 6 11"><path d={right ? 'M0 0l6 5.5L0 11z' : 'M6 0L0 5.5 6 11z'} fill="#666" /></svg>
);
const MacroIcon = () => (
  <svg width="18" height="18" viewBox="0 0 18 18" fill="none" stroke="#444" strokeWidth="1.2">
    <path d="M1 3l16-2M1 3v13h16V1" /><path d="M3 7h5M3 10h3M3 13h3" /><circle cx="12" cy="11" r="3.5" /><circle cx="12" cy="11" r="1.4" fill="#444" />
  </svg>
);
const A11yIcon = () => (
  <svg width="19" height="20" viewBox="0 0 19 20" fill="none" stroke="#444" strokeWidth="1.2">
    <circle cx="8" cy="2.5" r="1.8" /><path d="M1 4c3 3 9 3 13 0M8 7v5M8 12c-3 1-4 3-4 6-1 1-2 1-3 0M9 15l2 3 7-8" />
  </svg>
);
const ViewNormal = () => (
  <svg width="16" height="16" viewBox="0 0 16 16" fill="none" stroke="#444" strokeWidth="1.2"><path d="M.6.6h14.8v14.8H.6zM5.5 0v16M10.5 0v16M0 5.5h16M0 10.5h16" /></svg>
);
const ViewPage = () => (
  <svg width="18" height="16" viewBox="0 0 18 16" fill="none" stroke="#444" strokeWidth="1.2"><rect x=".6" y=".6" width="16.8" height="14.8" /><rect x="4" y="2.5" width="10" height="11" /><path d="M6 6h6M6 8h6M6 10h6" /></svg>
);
const ViewBreak = () => (
  <svg width="18" height="16" viewBox="0 0 18 16" fill="none" stroke="#444" strokeWidth="1.2"><path d="M.6.6h16.8v14.8H.6M.6.6v11.4h16.8M5 .6v7.4h7V.6" /></svg>
);
const ZoomMinus = () => <svg width="9" height="2" viewBox="0 0 9 2"><path d="M0 1h9" stroke="#444" strokeWidth="1.3" /></svg>;
const ZoomPlus = () => <svg width="9" height="9" viewBox="0 0 9 9"><path d="M0 4.5h9M4.5 0v9" stroke="#444" strokeWidth="1.1" /></svg>;

const Diamond = ({ x, y, c = '#000', r = 3.4 }) => <path d={`M${x} ${y - r}L${x + r} ${y}L${x} ${y + r}L${x - r} ${y}z`} fill={c} />;
const ArcDial = () => (
  <svg width="83" height="161" viewBox="1 1 83 161">
    {[[10.3, 12.3], [59.3, 32.3], [59.3, 130.3], [10.3, 150.3]].map(([x, y]) => <Diamond key={x + '-' + y} x={x} y={y} />)}
    {[[28, 13.7], [45, 20.7], [69.7, 46], [77, 62.7], [77, 100], [69.7, 117], [45, 142.7], [28, 149.7]].map(([x, y]) => <rect key={x + '-' + y} x={x - 1} y={y - 1} width="2" height="2" fill="#000" />)}
    <path d="M44 81.3h30" stroke="#000" strokeWidth="1" />
    <Diamond x={79.3} y={81.3} c="#e00000" r={3} />
    <text x="10" y="90" fontSize="15" fontFamily="Noto Sans CJK SC" fill="#222">文本</text>
  </svg>
);

const Watermark = () => (
  <svg width="352" height="180" viewBox="0 0 352 180" fill="#fff" fillOpacity=".78" stroke="#c6c6c6" strokeWidth="1.3">
    <text x="5" y="112" fontSize="82" fontWeight="700" letterSpacing="-2" fontFamily="Liberation Sans">Bai</text>
    <ellipse cx="135" cy="47" rx="13" ry="17" />
    <ellipse cx="159" cy="22" rx="12" ry="17" />
    <ellipse cx="190" cy="24" rx="13" ry="17" />
    <ellipse cx="209" cy="54" rx="13" ry="17" />
    <path d="M171 50C190 50 192 72 205 80C222 95 212 114 192 114C180 114 178 110 171 110C164 110 160 114 148 114C128 114 120 95 137 80C150 72 152 50 171 50Z" />
    <text x="170" y="103" textAnchor="middle" fontSize="46" fontFamily="Liberation Sans">du</text>
    <text x="228" y="108" fontSize="57" fontWeight="700" fontFamily="Noto Sans CJK SC">经验</text>
    <text x="5" y="157" fontSize="42.4" fontFamily="Liberation Sans">jingyan.baidu.com</text>
  </svg>
);

const ROWS = [
  { n: 1, text: '项目计划书' },
  { n: 2, text: '项目合同书', shade: true },
  { n: 3, text: '员工档案', shade: true },
  { n: 4, text: '员工考勤', shade: true },
  { n: 5, text: '公司管理制度', shade: true },
];
const PLAIN_ROWS = [6, 7, 8, 9, 10, 11, 12, 13, 14, 15, 16, 17];
const TABS = [
  { t: '文件' }, { t: '开始', active: true, shift: 5 }, { t: '插入' }, { t: '页面布局' }, { t: '公式' }, { t: '数据' },
  { t: '审阅' }, { t: '视图' }, { t: '开发工具' }, { t: '帮助' }, { t: 'Acrobat', shift: 2 },
];

export default function App() {
  return (
    <Page>
      <Global />
      <TitleBar>
        <QuickAccess>
          <ExcelLogo />
          <QuickCell $w={20} />
          <SaveIcon />
          <QuickCell $w={16} />
          <UndoIcon />
          <QuickCell $w={24}><Chev c="#b8b8b8" /></QuickCell>
          <UndoIcon flip />
          <QuickCell $w={24}><Chev c="#b8b8b8" /></QuickCell>
          <QuickCell $w={5} />
          <FormIcon />
          <QuickCell $w={40}><QatMore /></QuickCell>
          <DocTitle>工作簿1  -  Excel</DocTitle>
        </QuickAccess>
        <SearchBox><SearchIcon />搜索</SearchBox>
        <TitleRight>
          <UserName>Z Gemini</UserName>
          <Avatar>ZG</Avatar>
          <WinBtn><MinIcon /></WinBtn>
          <WinBtn><RestoreIcon /></WinBtn>
          <WinBtn><CloseIcon /></WinBtn>
        </TitleRight>
      </TitleBar>

      <TabRow>
        {TABS.map(({ t, active, shift }) => <RibbonTab key={t} $active={active} $shift={shift}>{t}</RibbonTab>)}
        <ShareBtn><ShareIcon />共享<Chevron $ml={8}><Chev c="#fff" /></Chevron></ShareBtn>
      </TabRow>

      <Ribbon>
        <Group $w={130}>
          <GroupBody $pl={26}>
            <LargeTool $w={32}>
              <IconSlot $h={42}><PasteIcon /></IconSlot>
              <ToolLine>粘贴</ToolLine>
              <ToolLine><Chev /></ToolLine>
            </LargeTool>
            <SmallStack $ml={16} $w={50}>
              <StackRow><Chevron $ml={4}><CutIcon /></Chevron></StackRow>
              <StackRow><CopyIcon /><Chevron $ml={9}><Chev /></Chevron></StackRow>
              <StackRow><BrushIcon /></StackRow>
            </SmallStack>
          </GroupBody>
          <GroupFoot><GroupName>剪贴板</GroupName><Launcher><LaunchIcon /></Launcher></GroupFoot>
        </Group>

        <Group $w={345}>
          <GroupBody $pl={9}>
            <ToolColumn>
              <ToolRow>
                <Combo $w={211} $mr={2}>@宋体<Chev /></Combo>
                <Combo $w={49}>14<Chev /></Combo>
                <Cell $w={36}><FontGrow /></Cell>
                <Cell $w={32}><FontGrow small /></Cell>
              </ToolRow>
              <ToolRow>
                <Cell $w={30} $on><GlyphBold>B</GlyphBold></Cell>
                <Cell $w={34}><GlyphItalic>I</GlyphItalic></Cell>
                <Cell $w={28}><GlyphUnder>U</GlyphUnder></Cell>
                <Cell $w={20}><Chev /></Cell>
                <Cell $w={3} />
                <Sep />
                <Cell $w={2} />
                <Cell $w={28}><BorderIcon /></Cell>
                <Cell $w={20}><Chev /></Cell>
                <Cell $w={4} />
                <Sep />
                <Cell $w={3} />
                <Cell $w={26}><FillIcon /></Cell>
                <Cell $w={20}><Chev /></Cell>
                <Cell $w={36}><ColorA /></Cell>
                <Cell $w={10}><Chev /></Cell>
                <Cell $w={9} />
                <Sep />
                <Cell $w={8} />
                <Cell $w={20}><WenIcon /></Cell>
                <Cell $w={26}><Chev /></Cell>
              </ToolRow>
            </ToolColumn>
          </GroupBody>
          <GroupFoot><GroupName>字体</GroupName><Launcher><LaunchIcon /></Launcher></GroupFoot>
        </Group>

        <Group $w={333}>
          <GroupBody $pl={12}>
            <ToolColumn $w={166}>
              <ToolRow>
                <Cell $w={30}><Lines pos={0} /></Cell>
                <Cell $w={30} $on><Lines pos={3} /></Cell>
                <Cell $w={34}><Lines pos={8} h={24} /></Cell>
                <Sep />
                <Cell $w={32}><OrientIcon /></Cell>
                <Cell $w={14}><Chev /></Cell>
              </ToolRow>
              <ToolRow>
                <Cell $w={30}><Lines w={[18, 13, 18, 13]} pos={1} h={22} /></Cell>
                <Cell $w={30}><Lines w={[18, 12, 18, 12]} pos={1} anchor="center" h={22} /></Cell>
                <Cell $w={34}><Lines w={[18, 13, 18, 13]} pos={1} anchor="right" h={22} /></Cell>
                <Sep />
                <Cell $w={32}><IndentIcon /></Cell>
                <Cell $w={32}><IndentIcon right /></Cell>
              </ToolRow>
            </ToolColumn>
            <TallSep />
            <TextColumn>
              <TextTool><TextToolIcon><WrapIcon /></TextToolIcon>自动换行</TextTool>
              <TextTool><TextToolIcon><MergeIcon /></TextToolIcon>合并后居中<Chevron $ml={16}><Chev /></Chevron></TextTool>
            </TextColumn>
          </GroupBody>
          <GroupFoot><GroupName>对齐方式</GroupName><Launcher><LaunchIcon /></Launcher></GroupFoot>
        </Group>

        <Group $w={199}>
          <GroupBody $pl={10}>
            <ToolColumn>
              <ToolRow><Combo $w={178}>常规<Chev /></Combo></ToolRow>
              <ToolRow>
                <Cell $w={28}><AccountIcon /></Cell>
                <Cell $w={18}><Chev /></Cell>
                <Cell $w={38}><GlyphPercent>%</GlyphPercent></Cell>
                <Cell $w={28}><GlyphComma>,</GlyphComma></Cell>
                <Cell $w={2} />
                <Sep />
                <Cell $w={1} />
                <Cell $w={30}><DecIcon /></Cell>
                <Cell $w={34}><DecIcon more /></Cell>
              </ToolRow>
            </ToolColumn>
          </GroupBody>
          <GroupFoot><GroupName>数字</GroupName><Launcher><LaunchIcon /></Launcher></GroupFoot>
        </Group>

        <Group $w={249}>
          <GroupBody $pl={3}>
            <LargeTool $w={78}><IconSlot><Cond /></IconSlot><ToolLine>条件格式</ToolLine><ToolLine><Chev /></ToolLine></LargeTool>
            <LargeTool $w={70}><IconSlot><TableStyle /></IconSlot><ToolLine>套用</ToolLine><ToolLine>表格格式<Chev /></ToolLine></LargeTool>
            <LargeTool $w={92}><IconSlot><CellStyle /></IconSlot><ToolLine>单元格样式</ToolLine><ToolLine><Chev /></ToolLine></LargeTool>
          </GroupBody>
          <GroupFoot><GroupName>样式</GroupName></GroupFoot>
        </Group>

        <Group $w={180}>
          <GroupBody $pl={8}>
            <LargeTool $w={54}><IconSlot $h={42}><InsertIcon /></IconSlot><ToolLine>插入</ToolLine><ToolLine><Chev /></ToolLine></LargeTool>
            <LargeTool $w={54}><IconSlot $h={42}><DeleteIcon /></IconSlot><ToolLine>删除</ToolLine><ToolLine><Chev /></ToolLine></LargeTool>
            <LargeTool $w={54}><IconSlot><FormatIcon /></IconSlot><ToolLine>格式</ToolLine><ToolLine><Chev /></ToolLine></LargeTool>
          </GroupBody>
          <GroupFoot><GroupName>单元格</GroupName></GroupFoot>
        </Group>

        <Group $w={233}>
          <GroupBody $pl={14}>
            <SmallStack $w={49}>
              <StackRow><Chevron $ml={2}><SigmaIcon /></Chevron><Chevron $ml={9}><Chev /></Chevron></StackRow>
              <StackRow><DownFill /><Chevron $ml={7}><Chev /></Chevron></StackRow>
              <StackRow><EraserIcon /><Chevron $ml={7}><Chev /></Chevron></StackRow>
            </SmallStack>
            <LargeTool $w={75}><IconSlot><SortIcon /></IconSlot><ToolLine>排序和筛选</ToolLine><ToolLine><Chev /></ToolLine></LargeTool>
            <LargeTool $w={75} $ml={7}><IconSlot><FindIcon /></IconSlot><ToolLine>查找和选择</ToolLine><ToolLine><Chev /></ToolLine></LargeTool>
          </GroupBody>
          <GroupFoot><GroupName>编辑</GroupName></GroupFoot>
        </Group>

        <Group $w={72}>
          <GroupBody $center>
            <LargeTool $w={60}><IconSlot><AddinIcon /></IconSlot><ToolLine>加</ToolLine><ToolLine>载项</ToolLine></LargeTool>
          </GroupBody>
          <GroupFoot><GroupName>加载项</GroupName></GroupFoot>
        </Group>

        <Group $w={85}>
          <GroupBody $center>
            <LargeTool $w={70}><IconSlot><BaiduDisk /></IconSlot><ToolLine>保存到</ToolLine><ToolLine>百度网盘</ToolLine></LargeTool>
          </GroupBody>
          <GroupFoot><GroupName>保存</GroupName></GroupFoot>
        </Group>
        <RibbonEnd><WideChev c="#444" w={13} /></RibbonEnd>
      </Ribbon>

      <FormulaBar>
        <NameBox>A1<WideChev c="#555" w={12} /></NameBox>
        <Dots><MoreDots /></Dots>
        <FxBox><CloseIcon s={14} c="#c4c4c4" /><CheckMark /><FxGlyph>fx</FxGlyph></FxBox>
        <FormulaInput>项目计划书<WideChev c="#999" w={13} /></FormulaInput>
      </FormulaBar>

      <SheetArea>
        <Grid>
          <HeadRow><Corner><CornerTri /></Corner><ColHead /><ColRest /></HeadRow>
          {ROWS.map(r => (
            <SheetRow key={r.n} $h={66}>
              <RowHead $sel><RowNumber>{r.n}</RowNumber></RowHead>
              <MainCell $shade={r.shade}><RotatedText>{r.text}</RotatedText></MainCell>
              <RestCell />
            </SheetRow>
          ))}
          {PLAIN_ROWS.map(n => (
            <SheetRow key={n} $h={29}>
              <RowHead><RowNumber>{n}</RowNumber></RowHead>
              <MainCell />
              <RestCell />
            </SheetRow>
          ))}
          <Selection><SelHandle /></Selection>
        </Grid>
        <VScroll>
          <VTrack>
            <Tri c="#666" />
            <VThumb />
            <VDown><Tri down c="#666" /></VDown>
          </VTrack>
        </VScroll>
      </SheetArea>

      <SheetBar>
        <NavArrow><NavIcon /></NavArrow>
        <NavArrow><NavIcon right /></NavArrow>
        <SheetTab>Sheet1</SheetTab>
        <TabSep />
        <AddSheet><PlusIcon /></AddSheet>
        <HDots><MoreDots /></HDots>
        <HTrack>
          <Side />
          <HThumb />
          <HRight><Side right /></HRight>
        </HTrack>
      </SheetBar>

      <StatusBar>
        <StatusItem $ml={15}>就绪</StatusItem>
        <StatusItem $ml={24}><MacroIcon /></StatusItem>
        <StatusItem $ml={22}><A11yIcon /></StatusItem>
        <StatusItem $ml={3}>辅助功能: 一切就绪</StatusItem>
        <StatusItem $ml="auto">计数: 5</StatusItem>
        <StatusItem $ml={25}>
          <ViewBtn $on><ViewNormal /></ViewBtn>
          <ViewBtn><ViewPage /></ViewBtn>
          <ViewBtn><ViewBreak /></ViewBtn>
        </StatusItem>
        <StatusItem $ml={8}><ZoomMinus /></StatusItem>
        <ZoomTrack><ZoomThumb /></ZoomTrack>
        <StatusItem $ml={7}><ZoomPlus /></StatusItem>
        <StatusItem $ml={17}>100%</StatusItem>
      </StatusBar>
      <BottomStrip><StripWindow><StripOrb /></StripWindow></BottomStrip>

      <Dialog>
        <DialogHead>
          <DialogTitle>设置单元格格式</DialogTitle>
          <HeadBtn>?</HeadBtn>
          <HeadBtn><CloseIcon s={12} c="#222" sw={1} /></HeadBtn>
        </DialogHead>
        <DialogTabs>
          <DlgTab $w={69} $first>数字</DlgTab>
          <DlgTab $w={75} $on>对齐</DlgTab>
          <DlgTab $w={70}>字体</DlgTab>
          <DlgTab $w={72}>边框</DlgTab>
          <DlgTab $w={72}>填充</DlgTab>
          <DlgTab $w={70}>保护</DlgTab>
        </DialogTabs>
        <Panel>
          <LeftCol>
            <SectionHead>文本对齐方式</SectionHead>
            <Indented>
              <AlignGrid>
                <FieldCol $w={149} $pt={11}>
                  <FieldLabel>水平对齐(<u>H</u>):</FieldLabel>
                  <Select $w={149} $mt={4}>
                    <SelectValue><Highlight>分散对齐 (缩进)</Highlight></SelectValue>
                    <SelectBtn><WideChev c="#666" w={11} /></SelectBtn>
                  </Select>
                  <FieldLabel $mt={7}>垂直对齐(<u>V</u>):</FieldLabel>
                  <Select $w={149} $mt={3}>
                    <SelectValue>居中</SelectValue>
                    <SelectBtn><WideChev c="#666" w={11} /></SelectBtn>
                  </Select>
                </FieldCol>
                <FieldCol $w={85} $pt={44}>
                  <FieldLabel>缩进(<u>I</u>):</FieldLabel>
                  <SpinBox $w={85} $mt={5}>
                    0
                    <SpinBtns><SpinBtn><Tri /></SpinBtn><SpinBtn><Tri down /></SpinBtn></SpinBtns>
                  </SpinBox>
                </FieldCol>
              </AlignGrid>
              <CheckRow $mt={7}><CheckBox /><span>两端分散对齐(<u>E</u>)</span></CheckRow>
            </Indented>
            <SectionHead $mt={17}>文本控制</SectionHead>
            <Indented>
              <CheckRow $mt={12}><CheckBox /><span>自动换行(<u>W</u>)</span></CheckRow>
              <CheckRow $mt={9} $off><CheckBox $off /><span>缩小字体填充(K)</span></CheckRow>
              <CheckRow $mt={11}><CheckBox /><span>合并单元格(<u>M</u>)</span></CheckRow>
            </Indented>
            <SectionHead $mt={16}>从右到左</SectionHead>
            <Indented>
              <FieldLabel $mt={10}>文字方向(<u>T</u>):</FieldLabel>
              <Select $w={131} $mt={4}>
                <SelectValue>根据内容</SelectValue>
                <SelectBtn><WideChev c="#666" w={11} /></SelectBtn>
              </Select>
            </Indented>
          </LeftCol>
          <DirField>
            <DirLegend>方向</DirLegend>
            <DirBoxes>
              <VerticalBox>文本</VerticalBox>
              <ArcBox><ArcDial /></ArcBox>
            </DirBoxes>
            <DegreeRow>
              <SpinBox $w={85} $pl={4}>
                0
                <SpinBtns><SpinBtn><Tri /></SpinBtn><SpinBtn><Tri down /></SpinBtn></SpinBtns>
              </SpinBox>
              <span>度(<u>D</u>)</span>
            </DegreeRow>
          </DirField>
        </Panel>
        <DialogFoot>
          <DlgButton $primary>确定</DlgButton>
          <DlgButton>取消</DlgButton>
        </DialogFoot>
        <RedBox $x={599} $y={272} $w={82} $h={47} />
        <RedBox $x={541} $y={347} $w={182} $h={81} />
        <RedBox $x={1043} $y={902} $w={126} $h={54} />
      </Dialog>

      <WatermarkLayer><Watermark /></WatermarkLayer>
    </Page>
  );
}
